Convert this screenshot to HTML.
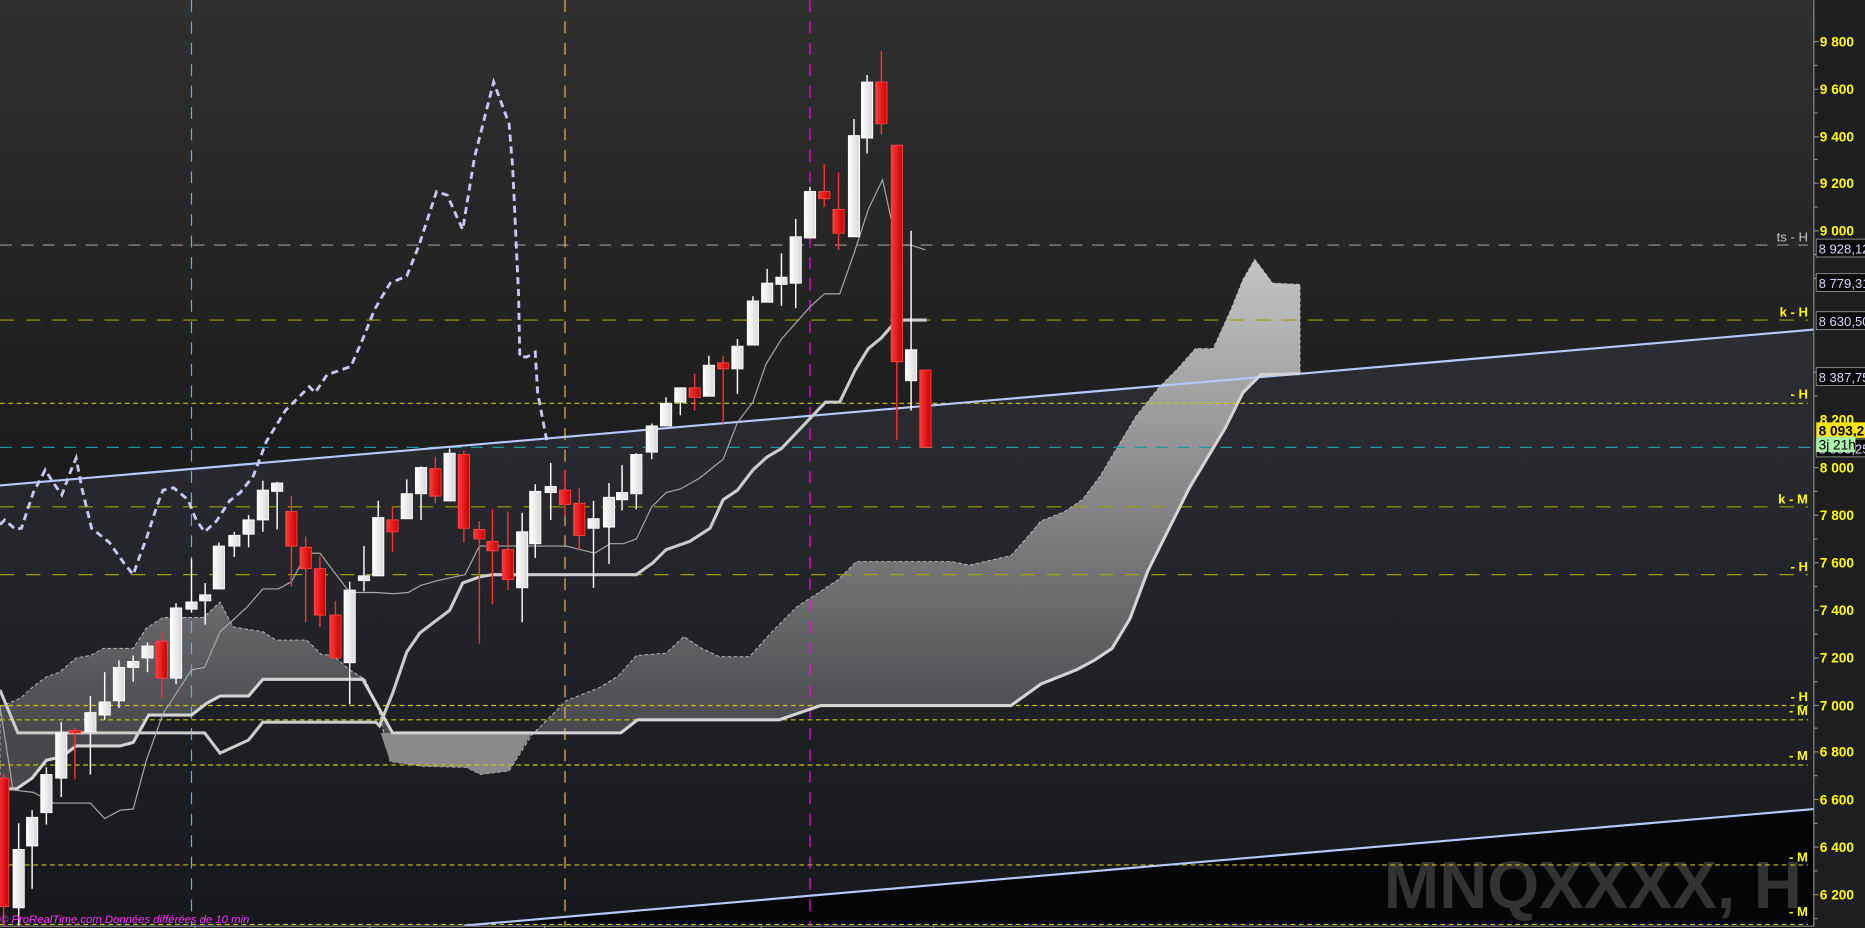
<!DOCTYPE html>
<html><head><meta charset="utf-8"><style>
html,body{margin:0;padding:0;background:#1e1e1e;overflow:hidden}
svg{display:block}
</style></head><body>
<svg width="1865" height="928" viewBox="0 0 1568 780" preserveAspectRatio="none" xmlns="http://www.w3.org/2000/svg" font-family="Liberation Sans, Arial, sans-serif">
<defs>
<linearGradient id="gTop" x1="0" y1="0" x2="0" y2="1"><stop offset="0" stop-color="#303030"/><stop offset="0.5" stop-color="#1c1c1c"/><stop offset="1" stop-color="#161616"/></linearGradient>
<linearGradient id="gMid" gradientUnits="userSpaceOnUse" x1="0" y1="280" x2="0" y2="780"><stop offset="0" stop-color="#2d2e33"/><stop offset="1" stop-color="#17181c"/></linearGradient>
<linearGradient id="gCloud" gradientUnits="userSpaceOnUse" x1="0" y1="220" x2="0" y2="620"><stop offset="0" stop-color="#c4c4c4"/><stop offset="1" stop-color="#48484c"/></linearGradient>
<linearGradient id="gW" x1="0" y1="0" x2="1" y2="0"><stop offset="0" stop-color="#ffffff"/><stop offset="1" stop-color="#d8d8d8"/></linearGradient>
<linearGradient id="gR" x1="0" y1="0" x2="1" y2="0"><stop offset="0" stop-color="#ff3a3a"/><stop offset="1" stop-color="#c80000"/></linearGradient>
</defs>
<!-- backgrounds -->
<rect x="0" y="0" width="1525" height="780" fill="url(#gTop)"/>
<polygon points="0,408 1525,277 1525,780 0,780" fill="url(#gMid)"/>
<polygon points="390,778 1525,680 1525,780 390,780" fill="#050505"/>
<rect x="1525" y="0" width="43" height="780" fill="#1e1e1e"/>

<!-- watermark -->
<text x="1515" y="763" text-anchor="end" font-size="56" font-weight="bold" fill="#333333">MNQXXXX, H</text>

<!-- cloud -->
<polygon fill="url(#gCloud)" stroke="#bbbbbb" stroke-width="0.8" stroke-dasharray="3 2" points="0,594 17,587 28,577 39,569 50,565 64,553 76,551 87,545 112,545 123,528 137,519 171,519 185,506 196,527 221,531 232,538 258,538 270,550 280,551 294,563 307,571 318,595 328,640 354,644 392,645 404,651 428,648 447,618 476,589 504,578 520,568 535,551 560,549 575,535 590,545 605,552 630,552 650,530 670,510 690,497 705,487 720,472 800,472 815,475 850,467 865,450 875,438 895,430 910,420 925,400 940,375 955,350 975,325 990,310 1005,293 1020,293 1035,260 1045,235 1055,218 1070,238 1093,239 1093,314 1060,315 1045,330 1030,360 1015,385 1000,410 985,440 965,480 950,520 935,545 920,555 905,563 875,575 850,593 690,593 655,605 536,605 522,616 330,616 305,571 221,571 209,585 185,585 174,591 161,601 125,601 112,624 101,627 64,627 52,636 39,639 27,654 14,663 0,663"/>
<polygon fill="#8a8a8a" points="320,616 447,616 428,648 404,651 392,645 354,644 328,640"/>

<!-- horizontal level lines -->
<g fill="none" stroke-width="1">
<line x1="0" y1="206" x2="1520" y2="206" stroke="#9a9a9a" stroke-dasharray="10 8"/>
<line x1="0" y1="269" x2="1520" y2="269" stroke="#a0a000" stroke-dasharray="12 10"/>
<line x1="0" y1="339" x2="1520" y2="339" stroke="#c8c800" stroke-dasharray="4 3"/>
<line x1="0" y1="376" x2="1525" y2="376" stroke="#1a9a9a" stroke-dasharray="10 8"/>
<line x1="0" y1="426" x2="1520" y2="426" stroke="#a0a000" stroke-dasharray="12 10"/>
<line x1="0" y1="483" x2="1520" y2="483" stroke="#a0a000" stroke-dasharray="12 10"/>
<line x1="0" y1="593" x2="1520" y2="593" stroke="#c8c800" stroke-dasharray="4 3"/>
<line x1="0" y1="605" x2="1520" y2="605" stroke="#c8c800" stroke-dasharray="4 3"/>
<line x1="0" y1="643" x2="1520" y2="643" stroke="#c8c800" stroke-dasharray="4 3"/>
<line x1="0" y1="727" x2="1520" y2="727" stroke="#c8c800" stroke-dasharray="4 3"/>
<line x1="0" y1="777" x2="1520" y2="777" stroke="#c8c800" stroke-dasharray="4 3"/>
</g>
<!-- vertical lines -->
<line x1="161" y1="0" x2="161" y2="778" stroke="#5ab4e6" stroke-dasharray="10 8"/>
<line x1="475" y1="0" x2="475" y2="778" stroke="#e8b860" stroke-dasharray="10 8"/>
<line x1="681" y1="0" x2="681" y2="778" stroke="#ff00ff" stroke-dasharray="10 8"/>

<!-- trend lines -->
<line x1="0" y1="408" x2="1525" y2="277" stroke="#b8c8ff" stroke-width="1.8"/>
<line x1="390" y1="778" x2="1525" y2="680" stroke="#b8c8ff" stroke-width="1.8"/>

<!-- senkou B thick -->
<polyline fill="none" stroke="#d4d4d4" stroke-width="2.6" points="0,663 14,663 27,654 39,639 52,636 64,627 101,627 112,624 125,601 161,601 174,591 185,585 209,585 221,571 305,571 330,616 522,616 536,605 655,605 690,593 850,593 875,575 905,563 920,555 935,545 950,520 965,480 985,440 1000,410 1015,385 1030,360 1045,330 1060,315 1093,314"/>
<!-- kijun thick -->
<polyline fill="none" stroke="#cccccc" stroke-width="2.6" points="0,580 15,616 172,616 185,633 209,622 221,607 316,607 319,610 330,583 342,548 353,532 378,513 389,490 403,485 414,483 535,483 549,473 560,462 580,455 597,444 608,420 620,412 633,395 645,384 657,377 694,338 706,338 719,311 730,293 741,284 754,269 779,269"/>
<!-- tenkan thin -->
<polyline fill="none" stroke="#a8a8a8" stroke-width="1" points="0,594 11,664 28,666 45,675 76,675 88,688 101,681 112,680 123,639 137,600 161,563 172,561 185,531 207,511 221,495 234,495 245,489 258,465 269,465 294,498 315,498 331,499 343,498 354,492 368,488 391,483 403,459 476,459 500,465 513,457 524,457 535,453 548,426 560,414 572,411 588,402 608,386 620,355 633,338 644,306 657,285 681,258 693,247 706,247 718,213 730,176 742,151 754,206 766,206 778,210"/>
<!-- chikou dashed -->
<polyline fill="none" stroke="#c8c8f4" stroke-width="2.4" stroke-dasharray="6 4" points="0,441 4,437 13,445 18,444 28,414 38,395 45,406 52,416 59,397 64,385 69,411 77,444 92,456 104,473 112,483 118,466 123,453 132,425 137,412 146,410 158,420 165,437 172,447 182,438 193,421 202,414 213,400 224,371 240,345 260,325 265,330 275,315 295,308 305,285 315,260 322,248 328,238 342,232 352,207 367,161 376,164 389,193 399,132 415,69 428,104 431,140 436,248 437,300 443,300 450,296 452,330 460,372"/>

<!-- candles -->
<g stroke-width="1.2">
<g stroke="#ffffff">
<line x1="15.7" y1="692" x2="15.7" y2="778"/><line x1="27" y1="681" x2="27" y2="747"/><line x1="39" y1="645" x2="39" y2="693"/><line x1="51.5" y1="607" x2="51.5" y2="670"/><line x1="76" y1="585" x2="76" y2="651"/><line x1="88" y1="565" x2="88" y2="605"/><line x1="100" y1="555" x2="100" y2="595"/><line x1="112" y1="551" x2="112" y2="573"/><line x1="124" y1="540" x2="124" y2="565"/><line x1="148" y1="507" x2="148" y2="575"/><line x1="161" y1="470" x2="161" y2="515"/><line x1="172.5" y1="490" x2="172.5" y2="525"/><line x1="184" y1="456" x2="184" y2="495"/><line x1="197" y1="447" x2="197" y2="468"/><line x1="209" y1="433" x2="209" y2="460"/><line x1="221" y1="404" x2="221" y2="447"/><line x1="233" y1="405" x2="233" y2="445"/><line x1="294" y1="489" x2="294" y2="592"/><line x1="306" y1="459" x2="306" y2="497"/><line x1="318" y1="421" x2="318" y2="484"/><line x1="342" y1="403" x2="342" y2="436"/><line x1="354" y1="392" x2="354" y2="437"/><line x1="378" y1="377" x2="378" y2="421"/><line x1="439" y1="431" x2="439" y2="523"/><line x1="450" y1="407" x2="450" y2="469"/><line x1="463" y1="389" x2="463" y2="437"/><line x1="499" y1="421" x2="499" y2="494"/><line x1="512" y1="406" x2="512" y2="474"/><line x1="523" y1="391" x2="523" y2="429"/><line x1="535" y1="381" x2="535" y2="428"/><line x1="548" y1="356" x2="548" y2="386"/><line x1="560" y1="334" x2="560" y2="358"/><line x1="572" y1="326" x2="572" y2="349"/><line x1="596" y1="299" x2="596" y2="333"/><line x1="620" y1="285" x2="620" y2="331"/><line x1="633" y1="249" x2="633" y2="290"/><line x1="645" y1="226" x2="645" y2="254"/><line x1="657" y1="213" x2="657" y2="257"/><line x1="669" y1="184" x2="669" y2="259"/><line x1="681" y1="157" x2="681" y2="200"/><line x1="718" y1="100" x2="718" y2="199"/><line x1="729" y1="63" x2="729" y2="129"/><line x1="766" y1="194" x2="766" y2="345"/>
</g>
<g stroke="#ff3030">
<line x1="3" y1="650" x2="3" y2="778"/><line x1="63" y1="612" x2="63" y2="655"/><line x1="136" y1="531" x2="136" y2="587"/><line x1="245" y1="417" x2="245" y2="493"/><line x1="257" y1="451" x2="257" y2="523"/><line x1="269" y1="468" x2="269" y2="527"/><line x1="282" y1="505" x2="282" y2="553"/><line x1="330" y1="426" x2="330" y2="464"/><line x1="366" y1="384" x2="366" y2="423"/><line x1="390" y1="379" x2="390" y2="456"/><line x1="403" y1="438" x2="403" y2="541"/><line x1="414" y1="428" x2="414" y2="508"/><line x1="427" y1="430" x2="427" y2="496"/><line x1="475" y1="395" x2="475" y2="434"/><line x1="487" y1="410" x2="487" y2="462"/><line x1="584" y1="314" x2="584" y2="345"/><line x1="608" y1="299" x2="608" y2="356"/><line x1="693" y1="138" x2="693" y2="174"/><line x1="705" y1="145" x2="705" y2="210"/><line x1="741" y1="43" x2="741" y2="113"/><line x1="754" y1="122" x2="754" y2="370"/>
</g>
</g>
<g fill="url(#gW)" stroke="#ffffff" stroke-width="0.8">
<rect x="11" y="714" width="9.4" height="49"/><rect x="22.3" y="687" width="9.4" height="24"/><rect x="34.3" y="651" width="9.4" height="32"/><rect x="46.8" y="616" width="9.4" height="38"/><rect x="71.3" y="599" width="9.4" height="16"/><rect x="83.3" y="590" width="9.4" height="11"/><rect x="95.3" y="561" width="9.4" height="28"/><rect x="107.3" y="556" width="9.4" height="5"/><rect x="119.3" y="543" width="9.4" height="10"/><rect x="143.3" y="511" width="9.4" height="59"/><rect x="156.3" y="506" width="9.4" height="6"/><rect x="167.8" y="500" width="9.4" height="5"/><rect x="179.3" y="459" width="9.4" height="36"/><rect x="192.3" y="450" width="9.4" height="9"/><rect x="204.3" y="437" width="9.4" height="12"/><rect x="216.3" y="412" width="9.4" height="25"/><rect x="228.3" y="406" width="9.4" height="7"/><rect x="289.3" y="496" width="9.4" height="61"/><rect x="301.3" y="484" width="9.4" height="4"/><rect x="313.3" y="435" width="9.4" height="49"/><rect x="337.3" y="415" width="9.4" height="21"/><rect x="349.3" y="393" width="9.4" height="22"/><rect x="373.3" y="381" width="9.4" height="40"/><rect x="434.3" y="447" width="9.4" height="47"/><rect x="445.3" y="413" width="9.4" height="44"/><rect x="458.3" y="409" width="9.4" height="5"/><rect x="494.3" y="436" width="9.4" height="8"/><rect x="507.3" y="418" width="9.4" height="25"/><rect x="518.3" y="414" width="9.4" height="6"/><rect x="530.3" y="382" width="9.4" height="33"/><rect x="543.3" y="358" width="9.4" height="22"/><rect x="555.3" y="339" width="9.4" height="19"/><rect x="567.3" y="326" width="9.4" height="12"/><rect x="591.3" y="307" width="9.4" height="26"/><rect x="615.3" y="291" width="9.4" height="19"/><rect x="628.3" y="253" width="9.4" height="37"/><rect x="640.3" y="238" width="9.4" height="16"/><rect x="652.3" y="233" width="9.4" height="6"/><rect x="664.3" y="199" width="9.4" height="39"/><rect x="676.3" y="161" width="9.4" height="39"/><rect x="713.3" y="114" width="9.4" height="85"/><rect x="724.3" y="69" width="9.4" height="47"/><rect x="761.3" y="294" width="9.4" height="26"/>
</g>
<g fill="url(#gR)" stroke="#ff4040" stroke-width="0.8">
<rect x="-2" y="654" width="9.4" height="108"/><rect x="58.3" y="614" width="9.4" height="2"/><rect x="131.3" y="539" width="9.4" height="31"/><rect x="240.3" y="430" width="9.4" height="29"/><rect x="252.3" y="460" width="9.4" height="18"/><rect x="264.3" y="478" width="9.4" height="39"/><rect x="277.3" y="517" width="9.4" height="36"/><rect x="325.3" y="437" width="9.4" height="10"/><rect x="361.3" y="394" width="9.4" height="23"/><rect x="385.3" y="382" width="9.4" height="62"/><rect x="398.3" y="445" width="9.4" height="8"/><rect x="409.3" y="455" width="9.4" height="8"/><rect x="422.3" y="462" width="9.4" height="25"/><rect x="470.3" y="412" width="9.4" height="12"/><rect x="482.3" y="423" width="9.4" height="27"/><rect x="579.3" y="326" width="9.4" height="8"/><rect x="603.3" y="305" width="9.4" height="5"/><rect x="688.3" y="161" width="9.4" height="6"/><rect x="700.3" y="176" width="9.4" height="20"/><rect x="736.3" y="69" width="9.4" height="35"/><rect x="749.3" y="122" width="9.4" height="182"/><rect x="773.3" y="311" width="9.4" height="65"/>
</g>

<!-- level labels -->
<g font-size="11" text-anchor="end" font-weight="bold">
<text x="1520" y="203" fill="#c8c8c8" font-weight="normal">ts - H</text>
<text x="1520" y="266" fill="#ffff00">k - H</text>
<text x="1520" y="335" fill="#ffff00">- H</text>
<text x="1520" y="423" fill="#ffff00">k - M</text>
<text x="1520" y="480" fill="#ffff00">- H</text>
<text x="1520" y="589" fill="#ffff00">- H</text>
<text x="1520" y="601" fill="#ffff00">- M</text>
<text x="1520" y="639" fill="#ffff00">- M</text>
<text x="1520" y="724" fill="#ffff00">- M</text>
<text x="1520" y="770" fill="#ffff00">- M</text>
</g>

<!-- axis -->
<line x1="1525" y1="0" x2="1525" y2="779" stroke="#8a8a8a" stroke-width="1"/>
<line x1="0" y1="778.5" x2="1525" y2="778.5" stroke="#8a8a8a" stroke-width="1"/>
<g stroke="#8a8a8a" stroke-width="1">
<line x1="1525" y1="35" x2="1529" y2="35"/><line x1="1525" y1="55" x2="1528" y2="55"/><line x1="1525" y1="75" x2="1529" y2="75"/><line x1="1525" y1="95" x2="1528" y2="95"/><line x1="1525" y1="115" x2="1529" y2="115"/><line x1="1525" y1="134" x2="1528" y2="134"/><line x1="1525" y1="154" x2="1529" y2="154"/><line x1="1525" y1="174" x2="1528" y2="174"/><line x1="1525" y1="194" x2="1529" y2="194"/><line x1="1525" y1="214" x2="1528" y2="214"/><line x1="1525" y1="234" x2="1529" y2="234"/><line x1="1525" y1="313" x2="1529" y2="313"/><line x1="1525" y1="333" x2="1528" y2="333"/><line x1="1525" y1="393" x2="1529" y2="393"/><line x1="1525" y1="413" x2="1528" y2="413"/><line x1="1525" y1="433" x2="1529" y2="433"/><line x1="1525" y1="453" x2="1528" y2="453"/><line x1="1525" y1="473" x2="1529" y2="473"/><line x1="1525" y1="493" x2="1528" y2="493"/><line x1="1525" y1="513" x2="1529" y2="513"/><line x1="1525" y1="533" x2="1528" y2="533"/><line x1="1525" y1="553" x2="1529" y2="553"/><line x1="1525" y1="573" x2="1528" y2="573"/><line x1="1525" y1="593" x2="1529" y2="593"/><line x1="1525" y1="612" x2="1528" y2="612"/><line x1="1525" y1="632" x2="1529" y2="632"/><line x1="1525" y1="652" x2="1528" y2="652"/><line x1="1525" y1="672" x2="1529" y2="672"/><line x1="1525" y1="692" x2="1528" y2="692"/><line x1="1525" y1="712" x2="1529" y2="712"/><line x1="1525" y1="732" x2="1528" y2="732"/><line x1="1525" y1="752" x2="1529" y2="752"/><line x1="1525" y1="772" x2="1528" y2="772"/>
<line x1="164" y1="778" x2="164" y2="780"/><line x1="311" y1="778" x2="311" y2="780"/><line x1="458" y1="778" x2="458" y2="780"/><line x1="640" y1="778" x2="640" y2="780"/><line x1="785" y1="778" x2="785" y2="780"/>
</g>
<g font-size="11.5" font-weight="bold" fill="#ffff00">
<text x="1530" y="39">9 800</text><text x="1530" y="79">9 600</text><text x="1530" y="119">9 400</text><text x="1530" y="158">9 200</text><text x="1530" y="198">9 000</text><text x="1530" y="238">8 800</text><text x="1530" y="277">8 600</text><text x="1530" y="317">8 400</text><text x="1530" y="357">8 200</text><text x="1530" y="397">8 000</text><text x="1530" y="437">7 800</text><text x="1530" y="477">7 600</text><text x="1530" y="517">7 400</text><text x="1530" y="557">7 200</text><text x="1530" y="597">7 000</text><text x="1530" y="636">6 800</text><text x="1530" y="676">6 600</text><text x="1530" y="716">6 400</text><text x="1530" y="756">6 200</text>
</g>
<!-- value boxes -->
<g font-size="11" fill="#d8d8ff">
<rect x="1527" y="201" width="45" height="15" fill="#0a0a0a" stroke="#8a8a8a" stroke-width="0.8"/><text x="1529" y="213">8 928,12</text>
<rect x="1527" y="230" width="45" height="15" fill="#0a0a0a" stroke="#8a8a8a" stroke-width="0.8"/><text x="1529" y="242">8 779,31</text>
<rect x="1527" y="262" width="45" height="15" fill="#0a0a0a" stroke="#8a8a8a" stroke-width="0.8"/><text x="1529" y="274">8 630,50</text>
<rect x="1527" y="309" width="45" height="15" fill="#0a0a0a" stroke="#8a8a8a" stroke-width="0.8"/><text x="1529" y="321">8 387,75</text>
<rect x="1527" y="369" width="45" height="15" fill="#0a0a0a" stroke="#8a8a8a" stroke-width="0.8"/><text x="1529" y="381">8 053,25</text>
</g>
<rect x="1527" y="355" width="45" height="13" fill="#ffe800"/><text x="1529" y="366" font-size="11.5" font-weight="bold" fill="#000">8 093,25</text>
<rect x="1527" y="367" width="33" height="13" fill="#a8f0a8"/><text x="1529" y="378" font-size="11.5" fill="#000">3j 21h</text>

<!-- copyright -->
<text x="0" y="776" font-size="9.5" font-style="italic" fill="#ff30ff">© ProRealTime.com  Données différées de 10 min</text>
</svg>
</body></html>
